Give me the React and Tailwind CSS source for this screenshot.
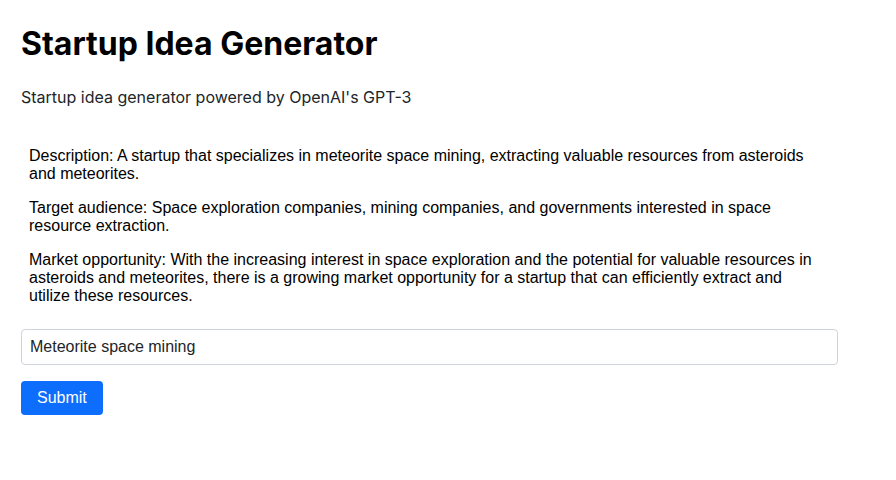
function App() {
  const ideas = [
    'Description: A startup that specializes in meteorite space mining, extracting valuable resources from asteroids and meteorites.',
    'Target audience: Space exploration companies, mining companies, and governments interested in space resource extraction.',
    'Market opportunity: With the increasing interest in space exploration and the potential for valuable resources in asteroids and meteorites, there is a growing market opportunity for a startup that can efficiently extract and utilize these resources.',
  ];

  return (
    <div className="min-h-[480px] bg-white pl-[21px] pt-[24px]" style={{ fontFamily: 'Inter, sans-serif' }}>
      <div className="w-[817px]">
        <h1 className="text-[32px] font-bold leading-[40px] text-black">Startup Idea Generator</h1>
        <p className="mt-[23px] text-[16px] leading-[20px] text-[#212529]">
          Startup idea generator powered by OpenAI's GPT-3
        </p>
        <div
          className="mt-[40px] px-[8px] text-[16px] leading-[18px] text-black"
          style={{ fontFamily: '"Liberation Sans", Arial, sans-serif' }}
        >
          {ideas.map((t) => (
            <p key={t} className="mb-[16px] w-[790px]">
              {t}
            </p>
          ))}
        </div>
        <input
          type="text"
          defaultValue="Meteorite space mining"
          className="mt-[24px] block h-[36px] w-full rounded border border-[#ced4da] px-[8px] text-[16px] text-[#212529] outline-none"
          style={{ fontFamily: '"Liberation Sans", Arial, sans-serif' }}
        />
        <button
          className="mt-[16px] h-[34px] rounded bg-[#0d6efd] px-[16px] text-[16px] text-white"
          style={{ fontFamily: '"Liberation Sans", Arial, sans-serif' }}
        >
          Submit
        </button>
      </div>
    </div>
  );
}

export default App;
